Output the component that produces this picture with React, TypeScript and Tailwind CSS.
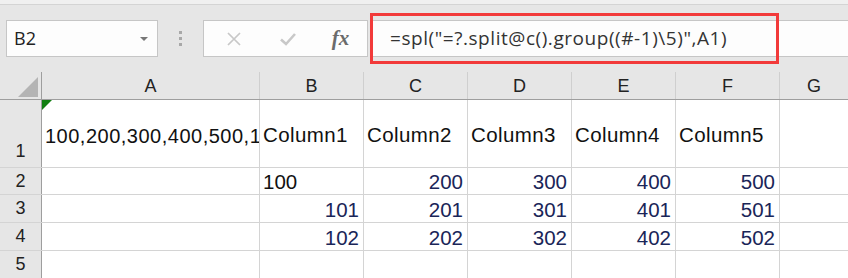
import React from 'react';

const cols = ['A', 'B', 'C', 'D', 'E', 'F', 'G'];
const colW = ['w-[218px]', 'w-[104px]', 'w-[104px]', 'w-[104px]', 'w-[104px]', 'w-[104px]', 'flex-1'];

type Cell = { text?: string; align?: 'left' | 'right'; blue?: boolean; flag?: boolean; word?: boolean };

const rows: { h: string; num: string; top?: boolean; cells: Cell[] }[] = [
  {
    h: 'h-[68px]',
    num: '1',
    top: true,
    cells: [
      { text: '100,200,300,400,500,1', flag: true },
      { text: 'Column1', word: true },
      { text: 'Column2', word: true },
      { text: 'Column3', word: true },
      { text: 'Column4', word: true },
      { text: 'Column5', word: true },
      {},
    ],
  },
  {
    h: 'h-[27px]',
    num: '2',
    cells: [
      {},
      { text: '100' },
      { text: '200', align: 'right', blue: true },
      { text: '300', align: 'right', blue: true },
      { text: '400', align: 'right', blue: true },
      { text: '500', align: 'right', blue: true },
      {},
    ],
  },
  {
    h: 'h-[28px]',
    num: '3',
    cells: [
      {},
      { text: '101', align: 'right', blue: true },
      { text: '201', align: 'right', blue: true },
      { text: '301', align: 'right', blue: true },
      { text: '401', align: 'right', blue: true },
      { text: '501', align: 'right', blue: true },
      {},
    ],
  },
  {
    h: 'h-[28px]',
    num: '4',
    cells: [
      {},
      { text: '102', align: 'right', blue: true },
      { text: '202', align: 'right', blue: true },
      { text: '302', align: 'right', blue: true },
      { text: '402', align: 'right', blue: true },
      { text: '502', align: 'right', blue: true },
      {},
    ],
  },
  { h: 'h-[28px]', num: '5', cells: [{}, {}, {}, {}, {}, {}, {}] },
];

const App: React.FC = () => {
  return (
    <div className="relative w-[848px] h-[278px] overflow-hidden bg-white font-['Liberation_Sans',Arial,sans-serif]">
      {/* Formula bar area */}
      <div className="h-[72px] bg-[#e6e6e6] flex flex-col">
        <div className="h-[5px] bg-[#f0f0f0] border-b border-[#d4d4d4]" />
        <div className="flex items-start pt-[15px] pl-[6px]">
          {/* Name box */}
          <div className="w-[152px] h-[37px] bg-[#fdfdfd] border border-[#c6c6c6] flex items-center justify-between pl-[7px] pr-[9px]">
            <span className="text-[18px] text-[#222] font-['Open_Sans',sans-serif]">B2</span>
            <span className="w-0 h-0 border-l-[4px] border-r-[4px] border-t-[4px] border-l-transparent border-r-transparent border-t-[#777]" />
          </div>
          {/* Grip dots */}
          <div className="w-[45px] h-[37px] flex flex-col items-center justify-center gap-[3px]">
            <span className="w-[3px] h-[3px] bg-[#a8a8a8]" />
            <span className="w-[3px] h-[3px] bg-[#a8a8a8]" />
            <span className="w-[3px] h-[3px] bg-[#a8a8a8]" />
          </div>
          {/* Buttons box */}
          <div className="w-[165px] h-[37px] bg-[#fdfdfd] border border-[#c6c6c6] flex items-center">
            <div className="w-[58px] flex justify-center">
              <svg width="16" height="16" viewBox="0 0 16 16" className="ml-[1px]">
                <path d="M2 2 L14 14 M14 2 L2 14" stroke="#c8c8c8" strokeWidth="1.7" fill="none" />
              </svg>
            </div>
            <div className="w-[52px] flex justify-center">
              <svg width="18" height="16" viewBox="0 0 18 16">
                <path d="M2 8.5 L7 13 L16 3" stroke="#c8c8c8" strokeWidth="2.6" fill="none" />
              </svg>
            </div>
            <div className="flex-1 flex justify-center">
              <span className="text-[21px] italic font-bold text-[#6b6b6b] font-['Liberation_Serif',serif] leading-none">
                fx
              </span>
            </div>
          </div>
          {/* Formula input */}
          <div className="ml-[3px] flex-1 h-[37px] bg-[#fdfdfd] border-y border-[#c6c6c6] flex items-center pl-[19px]">
            <span className="text-[19px] tracking-[0.55px] text-[#333] font-['Open_Sans',sans-serif] whitespace-pre">
              =spl("=?.split@c().group((#-1)\5)",A1)
            </span>
          </div>
        </div>
      </div>

      {/* Column headers */}
      <div className="flex h-[28px] bg-[#e6e6e6] border-b border-[#9e9e9e]">
        <div className="w-[42px] border-r border-[#9e9e9e] relative">
          <svg className="absolute right-[3px] bottom-[2px]" width="20" height="20" viewBox="0 0 20 20">
            <polygon points="20,0 20,20 0,20" fill="#b4b4b4" />
          </svg>
        </div>
        {cols.map((c, i) => (
          <div
            key={c}
            className={`${colW[i]} ${i < 6 ? 'border-r border-[#cfcfcf]' : ''} flex items-center justify-center text-[18px] text-[#222] pt-[2px]`}
          >
            {c}
          </div>
        ))}
      </div>

      {/* Rows */}
      {rows.map((r) => (
        <div key={r.num} className={`flex ${r.h} border-b border-[#d4d4d4]`}>
          <div
            className={`w-[42px] bg-[#e6e6e6] border-r border-[#9e9e9e] flex justify-center text-[18px] text-[#222] ${
              r.top ? 'items-end pb-[2px]' : 'items-center'
            }`}
          >
            {r.num}
          </div>
          {r.cells.map((cell, i) => (
            <div
              key={i}
              className={`${colW[i]} ${i < 6 ? 'border-r border-[#d4d4d4]' : ''} relative flex items-center whitespace-nowrap overflow-hidden ${
                cell.flag ? 'text-[20px] tracking-[0.5px]' : 'text-[20.5px]'
              } ${cell.align === 'right' ? 'justify-end pr-[4px]' : 'pl-[3px]'} ${
                cell.word ? 'tracking-[0.4px]' : ''
              } ${cell.blue ? 'text-[#1a2558]' : 'text-[#111]'} ${r.top ? 'pt-[4px]' : 'pt-[3px]'}`}
            >
              {cell.flag && (
                <svg className="absolute left-0 top-0" width="10" height="10" viewBox="0 0 10 10">
                  <polygon points="0,0 10,0 0,10" fill="#127f12" />
                </svg>
              )}
              {cell.text}
            </div>
          ))}
        </div>
      ))}

      {/* Red highlight around the formula */}
      <div className="absolute left-[370px] top-[13px] w-[409px] h-[51px] border-[3px] border-[#f23a3a]" />
    </div>
  );
};

export default App;
